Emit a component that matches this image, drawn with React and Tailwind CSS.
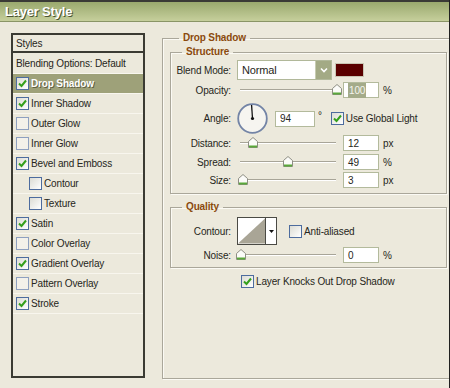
import React from "react";

const layers = [
  { name: "Drop Shadow", on: true, active: true },
  { name: "Inner Shadow", on: true },
  { name: "Outer Glow", on: false, faded: true },
  { name: "Inner Glow", on: false, faded: true },
  { name: "Bevel and Emboss", on: true },
  { name: "Contour", on: false, sub: true },
  { name: "Texture", on: false, sub: true },
  { name: "Satin", on: true },
  { name: "Color Overlay", on: false, faded: true },
  { name: "Gradient Overlay", on: true },
  { name: "Pattern Overlay", on: false, faded: true },
  { name: "Stroke", on: true },
];

function Check({ on, faded }) {
  return (
    <span
      className={
        "flex h-[13px] w-[13px] shrink-0 items-center justify-center border " +
        (faded
          ? "border-[#8ea0bf] bg-[#f3f1ea]"
          : "border-[#4d6c9e] bg-gradient-to-br from-[#dcdcd4] to-[#ffffff]")
      }
    >
      {on && (
        <svg width="9" height="9" viewBox="0 0 9 9">
          <path d="M1 4.5 L3.5 7 L8 1.5" fill="none" stroke="#35a01c" strokeWidth="2" />
        </svg>
      )}
    </span>
  );
}

function Slider({ pos }) {
  return (
    <div className="relative h-[12px] w-[100px]">
      <div className="absolute left-[3px] right-[1px] top-[5px] h-[2px] border-t border-[#a8a598] bg-white" />
      <svg
        className="absolute top-0"
        style={{ left: `${pos * 96 - 1.5}px` }}
        width="10"
        height="11"
        viewBox="0 0 10 11"
      >
        <path d="M0.5 4.5 L5 0.5 L9.5 4.5 L9.5 10.5 L0.5 10.5 Z" fill="#fbfbf8" stroke="#8e8e84" />
        <path d="M1 9.5 H9" stroke="#5aa83a" strokeWidth="2" />
      </svg>
    </div>
  );
}

function NumBox({ value, w = "w-[36px]", selected }) {
  return (
    <div className={`flex h-[16px] ${w} items-center border border-[#b3ba9c] bg-white pl-[4px]`}>
      <span className={selected ? "bg-[#a4ab8a] px-[1px] text-[#f4f4ee]" : ""}>{value}</span>
    </div>
  );
}

function Label({ children }) {
  return <div className="w-[61px] shrink-0 pr-[1px] text-right">{children}</div>;
}

function SliderRow({ label, pos, value, unit, mt, selected }) {
  return (
    <div className={`flex h-[16px] items-center ${mt}`}>
      <Label>{label}</Label>
      <div className="ml-[5px]">
        <Slider pos={pos} />
      </div>
      <div className="ml-[6px]">
        <NumBox value={value} selected={selected} />
      </div>
      <span className="ml-[4px]">{unit}</span>
    </div>
  );
}

const legendCls = "px-[4px] font-bold leading-[12px] text-[#8a4a0d]";
const boxCls =
  "border border-[#aaa79a] shadow-[inset_1px_1px_0_#fbfaf4,1px_1px_0_#fbfaf4]";

export default function App() {
  return (
    <div
      className="flex h-[388px] w-[450px] flex-col overflow-hidden border-r border-[#202020] bg-[#ece9dc] text-[10px] tracking-[-0.15px] text-[#262620]"
      style={{ fontFamily: '"Liberation Sans", Arial, sans-serif' }}
    >
      {/* title bar */}
      <div className="flex h-[22px] shrink-0 items-center border-t-2 border-b border-t-[#3a3a36] border-b-[#8a9566] bg-gradient-to-b from-[#9aa96e] to-[#c6cf9c] pl-[5px]">
        <span className="text-[13px] font-bold tracking-[-0.2px] text-white [text-shadow:1px_1px_0_#4b5432]">
          Layer Style
        </span>
      </div>

      <div className="flex flex-1">
        {/* styles list */}
        <div className="ml-[11px] mt-[11px] flex h-[345px] w-[134px] shrink-0 flex-col border-2 border-[#3b3b33]">
          <div className="flex h-[18px] items-center border-b-2 border-[#3b3b33] pl-[3px]">Styles</div>
          <div className="flex h-[20px] items-center pl-[3px]">Blending Options: Default</div>
          {layers.map((l) => (
            <div
              key={l.name}
              className={
                "flex h-[20px] items-center gap-[2px] border-t border-[#f8f6ee] " +
                (l.sub ? "pl-[16px] " : "pl-[3px] ") +
                (l.active ? "bg-[#9ea179] font-bold text-white [text-shadow:1px_1px_0_#5e6044]" : "")
              }
            >
              <Check on={l.on} faded={l.faded} />
              <span>{l.name}</span>
            </div>
          ))}
          <div className="border-t border-[#f8f6ee]" />
        </div>

        {/* drop shadow settings */}
        <fieldset className={`ml-[17px] mt-[10px] h-[347px] w-[300px] shrink-0 pl-[7px] ${boxCls}`}>
          <legend className={`ml-[9px] ${legendCls}`}>Drop Shadow</legend>

          <fieldset className={`mt-[2px] h-[148px] w-[277px] ${boxCls}`}>
            <legend className={`ml-[11px] ${legendCls}`}>Structure</legend>

            <div className="mt-[2px] flex h-[20px] items-center">
              <Label>Blend Mode:</Label>
              <div className="ml-[5px] flex h-[20px] w-[95px] items-center border border-[#b1b89a] bg-white">
                <span className="flex-1 pl-[4px] text-[11px]">Normal</span>
                <div className="flex h-[18px] w-[16px] items-center justify-center border-l border-[#c7ccb2] bg-[#a3aa85]">
                  <svg width="8" height="6" viewBox="0 0 8 6">
                    <path d="M1 1.5 L4 4.5 L7 1.5" fill="none" stroke="#fff" strokeWidth="1.6" />
                  </svg>
                </div>
              </div>
              <div className="ml-[3px] h-[14px] w-[29px] border border-[#c9c6b4] bg-[#5a0000]" />
            </div>

            <SliderRow label="Opacity:" pos={1} value="100" unit="%" mt="mt-[2px]" selected />

            <div className="mt-[5px] flex h-[31px] items-center">
              <Label>Angle:</Label>
              <div className="ml-[5px] h-[31px] w-[31px]">
                <svg width="31" height="31" viewBox="0 0 31 31">
                  <circle cx="15.5" cy="15.5" r="14.3" fill="#f6f5f0" stroke="#7384a6" strokeWidth="1.8" />
                  <line x1="15.5" y1="15.5" x2="14.6" y2="2" stroke="#111" strokeWidth="1.3" />
                  <circle cx="15.5" cy="15.5" r="1.6" fill="#111" />
                </svg>
              </div>
              <div className="ml-[7px]">
                <NumBox value="94" w="w-[40px]" />
              </div>
              <span className="ml-[3px] self-start pt-[5px]">°</span>
              <div className="ml-[9px] flex items-center gap-[2px]">
                <Check on />
                <span>Use Global Light</span>
              </div>
            </div>

            <SliderRow label="Distance:" pos={0.125} value="12" unit="px" mt="mt-[1px]" />
            <SliderRow label="Spread:" pos={0.49} value="49" unit="%" mt="mt-[3px]" />
            <SliderRow label="Size:" pos={0.03} value="3" unit="px" mt="mt-[2px]" />
          </fieldset>

          <fieldset className={`mt-[7px] h-[67px] w-[277px] ${boxCls}`}>
            <legend className={`ml-[11px] ${legendCls}`}>Quality</legend>

            <div className="mt-[4px] flex h-[28px] items-center">
              <Label>Contour:</Label>
              <div className="ml-[5px] flex h-[28px] w-[40px] border border-[#4a4a44] bg-white">
                <svg width="28" height="26" viewBox="0 0 28 26" className="border-r border-[#4a4a44]">
                  <path d="M0 26 L28 0 L28 26 Z" fill="#a9a596" />
                </svg>
                <div className="flex flex-1 items-center justify-center">
                  <svg width="5" height="3" viewBox="0 0 5 3">
                    <path d="M0 0 H5 L2.5 3 Z" fill="#111" />
                  </svg>
                </div>
              </div>
              <div className="ml-[12px] flex items-center gap-[2px]">
                <Check on={false} />
                <span>Anti-aliased</span>
              </div>
            </div>

            <SliderRow label="Noise:" pos={0} value="0" unit="%" mt="mt-[2px]" />
          </fieldset>

          <div className="ml-[71px] mt-[6px] flex items-center gap-[2px]">
            <Check on />
            <span>Layer Knocks Out Drop Shadow</span>
          </div>
        </fieldset>
      </div>
    </div>
  );
}
